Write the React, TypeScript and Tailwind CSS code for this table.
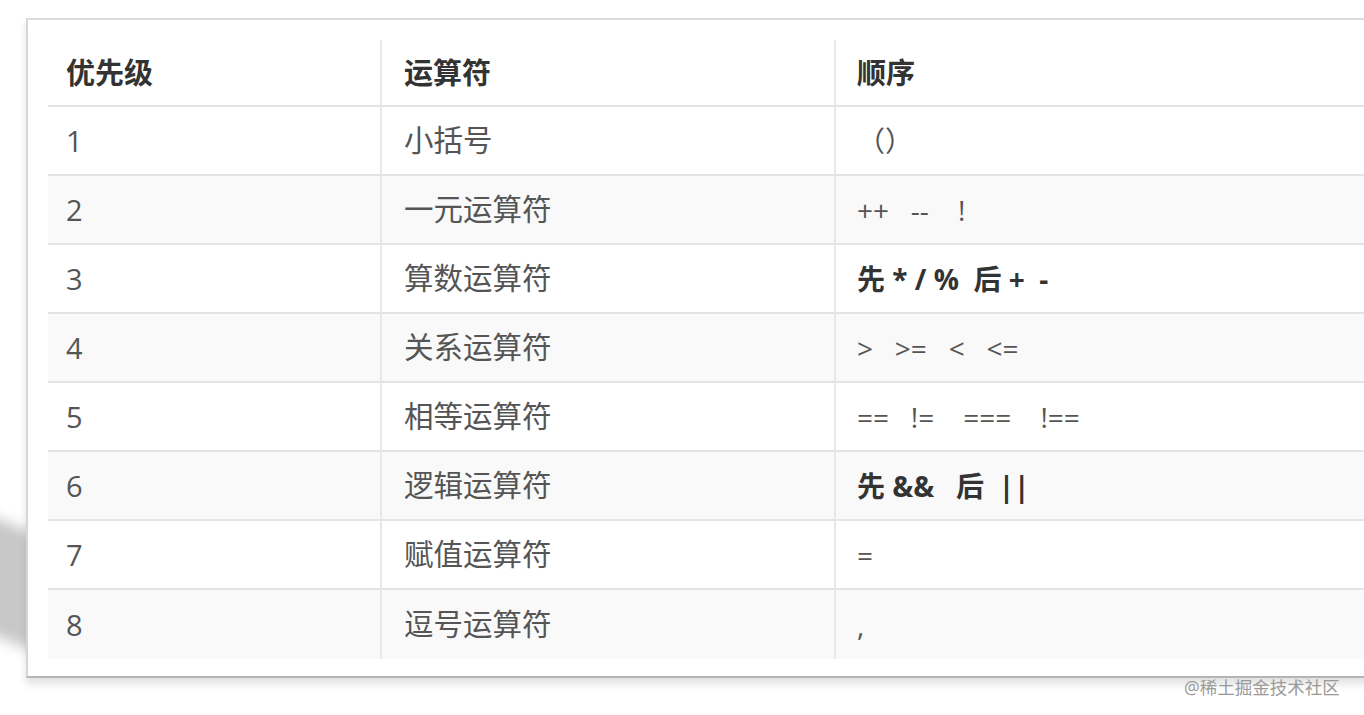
const rows: { level: string; name: string; order: string; bold?: boolean }[] = [
  { level: '1', name: '小括号', order: '（）' },
  { level: '2', name: '一元运算符', order: '++   --    !' },
  { level: '3', name: '算数运算符', order: '先 * / %  后 +  -', bold: true },
  { level: '4', name: '关系运算符', order: '>   >=   <   <=' },
  { level: '5', name: '相等运算符', order: '==   !=    ===    !==' },
  { level: '6', name: '逻辑运算符', order: '先 &&   后  ||', bold: true },
  { level: '7', name: '赋值运算符', order: '=' },
  { level: '8', name: '逗号运算符', order: ',' },
]

const font = { fontFamily: '"Open Sans", "Noto Sans CJK SC", sans-serif' }

function App() {
  return (
    <div className="relative h-[715px] w-full overflow-hidden bg-white" style={font}>
      {/* page shadow at the lower left */}
      <div className="absolute left-[-24px] top-[522px] h-[118px] w-[60px] skew-y-[22deg] bg-[#c8c8c8] blur-[7px]" />

      <div className="relative ml-[26px] mt-[18px] h-[660px] w-[1400px] border-l-2 border-t-2 border-b-2 border-l-[#d6d6d6] border-t-[#dcdcdc] border-b-[#b4b4b4] bg-white pl-[20px] pt-[20px] shadow-[0_6px_8px_rgba(0,0,0,0.12)]">
        <div className="grid grid-cols-[334px_454px_1fr]">
          <div className="flex h-[67px] items-center border-b-2 border-r-2 border-b-[#e4e4e4] border-r-[#e8e8e8] pl-[18px] text-[29px] font-bold text-[#333]">
            优先级
          </div>
          <div className="flex h-[67px] items-center border-b-2 border-r-2 border-b-[#e4e4e4] border-r-[#e8e8e8] pl-[22px] text-[29px] font-bold text-[#333]">
            运算符
          </div>
          <div className="flex h-[67px] items-center border-b-2 border-b-[#e4e4e4] pl-[21px] text-[29px] font-bold text-[#333]">
            顺序
          </div>

          {rows.map((r, i) => {
            const last = i === rows.length - 1
            const bg = i % 2 === 1 ? 'bg-[#f9f9f9]' : 'bg-white'
            const line = last ? '' : 'border-b-2 border-b-[#e4e4e4]'
            return (
              <div key={r.level} className="contents">
                <div className={`flex h-[69px] items-center border-r-2 border-r-[#e8e8e8] pl-[18px] text-[29px] text-[#555] ${bg} ${line}`}>
                  {r.level}
                </div>
                <div className={`flex h-[69px] items-center border-r-2 border-r-[#e8e8e8] pl-[22px] text-[29.5px] text-[#555] ${bg} ${line}`}>
                  {r.name}
                </div>
                <div
                  className={`flex h-[69px] items-center whitespace-pre pl-[21px] ${
                    r.bold ? 'text-[28px] font-bold text-[#333]' : 'text-[28px] text-[#555]'
                  } ${bg} ${line}`}
                >
                  {r.order}
                </div>
              </div>
            )
          })}
        </div>
      </div>

      <div className="absolute left-[1184px] top-[674px] text-[17.5px] text-[#9a9a9a]">@稀土掘金技术社区</div>
    </div>
  )
}

export default App
